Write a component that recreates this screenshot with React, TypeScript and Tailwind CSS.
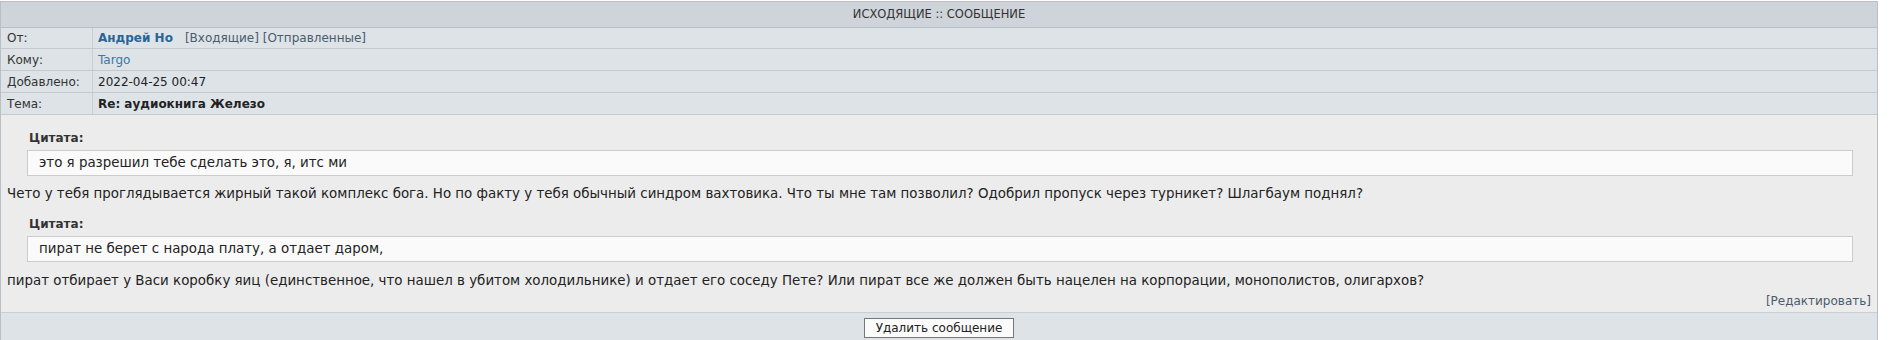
import React from 'react';

const font = "font-['DejaVu_Sans',Verdana,sans-serif]";

const Row: React.FC<{ label: string; children: React.ReactNode; h: string }> = ({ label, children, h }) => (
  <div className={`flex ${h} border-b border-[#c3c9cf]`}>
    <div className="w-[92px] shrink-0 border-r border-[#c9ced3] pl-[6px] flex items-center text-[#333]">{label}</div>
    <div className="flex-1 pl-[5px] flex items-center">{children}</div>
  </div>
);

const Quote: React.FC<{ text: string }> = ({ text }) => (
  <div className="pl-[26px] pr-[18px]">
    <div className="pl-[2px] font-bold text-[#333] text-[12px] leading-[14px] mb-[5px]">Цитата:</div>
    <div className="h-[26px] bg-[#fafafa] border border-[#cccccc] pl-[11px] flex items-center text-[13.4px] text-[#222]">{text}</div>
  </div>
);

const App: React.FC = () => {
  return (
    <div className={`w-[1890px] h-[340px] bg-white ${font} text-[12px] text-[#222]`}>
      <div className="w-[1878px] h-[339px] border-l border-t border-r border-[#b9bfc5] mt-[1px] flex flex-col">
        {/* Header */}
        <div className="h-[26px] shrink-0 bg-[#cfd4da] border-b border-[#b9bfc5] flex items-center justify-center text-[11.5px] text-[#333]">
          ИСХОДЯЩИЕ :: СООБЩЕНИЕ
        </div>

        {/* Info rows */}
        <div className="bg-[#dde3e7] shrink-0">
          <Row label="От:" h="h-[21px]">
            <span className="font-bold text-[#2a6496]">Андрей Но</span>
            <span className="ml-[12px] text-[#4a5b6e]">[Входящие] [Отправленные]</span>
          </Row>
          <Row label="Кому:" h="h-[22px]">
            <span className="text-[#3a78a8]">Targo</span>
          </Row>
          <Row label="Добавлено:" h="h-[22px]">
            <span>2022-04-25 00:47</span>
          </Row>
          <Row label="Тема:" h="h-[22px]">
            <span className="font-bold">Re: аудиокнига Железо</span>
          </Row>
        </div>

        {/* Body */}
        <div className="h-[198px] shrink-0 bg-[#ececec] border-b border-[#c9ced3] flex flex-col pt-[16px] pr-[6px]">
          <Quote text="это я разрешил тебе сделать это, я, итс ми" />
          <div className="pl-[6px] mt-[10px] leading-[16px] text-[13.4px]">
            Чето у тебя проглядывается жирный такой комплекс бога. Но по факту у тебя обычный синдром вахтовика. Что ты мне там позволил? Одобрил пропуск через турникет? Шлагбаум поднял?
          </div>
          <div className="mt-[15px]">
            <Quote text="пират не берет с народа плату, а отдает даром," />
          </div>
          <div className="pl-[6px] mt-[11px] leading-[16px] text-[13.4px]">
            пират отбирает у Васи коробку яиц (единственное, что нашел в убитом холодильнике) и отдает его соседу Пете? Или пират все же должен быть нацелен на корпорации, монополистов, олигархов?
          </div>
          <div className="mt-auto mb-[3px] flex justify-end text-[#4a5b6e] leading-[16px]">[Редактировать]</div>
        </div>

        {/* Footer */}
        <div className="flex-1 bg-[#dde3e7] flex justify-center pt-[5px]">
          <button className="w-[150px] h-[20px] bg-[#fbfbfb] border border-[#777] text-[12px] text-[#222] leading-[18px]">
            Удалить сообщение
          </button>
        </div>
      </div>
    </div>
  );
};

export default App;
